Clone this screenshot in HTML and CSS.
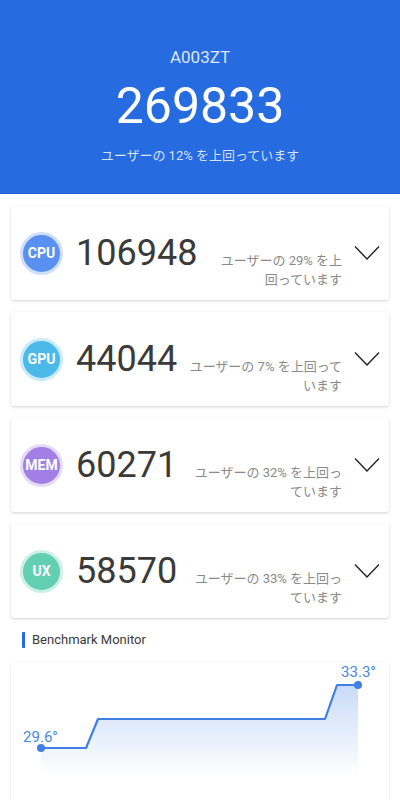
FILE: index.html
```html
<!DOCTYPE html>
<html>

<head>
  <meta charset="UTF-8">
  <title>Benchmark Result</title>
  <link rel="stylesheet" href="styles.css">
</head>

<body>
  <header class="summary">
    <div class="model">A003ZT</div>
    <div class="total">269833</div>
    <div class="rank">ユーザーの 12% を上回っています</div>
  </header>

  <main class="content">
    <div class="card">
      <div class="badge badge-cpu">CPU</div>
      <div class="score">
        <span class="number">106948</span>
        <p class="note"><span>ユーザーの 29% を上</span><span>回っています</span></p>
      </div>
      <svg class="chevron" width="26" height="16" viewBox="0 0 26 16">
        <polyline points="1,1.5 13,14 25,1.5" />
      </svg>
    </div>

    <div class="card">
      <div class="badge badge-gpu">GPU</div>
      <div class="score">
        <span class="number">44044</span>
        <p class="note"><span>ユーザーの 7% を上回って</span><span>います</span></p>
      </div>
      <svg class="chevron" width="26" height="16" viewBox="0 0 26 16">
        <polyline points="1,1.5 13,14 25,1.5" />
      </svg>
    </div>

    <div class="card">
      <div class="badge badge-mem">MEM</div>
      <div class="score">
        <span class="number">60271</span>
        <p class="note"><span>ユーザーの 32% を上回っ</span><span>ています</span></p>
      </div>
      <svg class="chevron" width="26" height="16" viewBox="0 0 26 16">
        <polyline points="1,1.5 13,14 25,1.5" />
      </svg>
    </div>

    <div class="card">
      <div class="badge badge-ux">UX</div>
      <div class="score">
        <span class="number">58570</span>
        <p class="note"><span>ユーザーの 33% を上回っ</span><span>ています</span></p>
      </div>
      <svg class="chevron" width="26" height="16" viewBox="0 0 26 16">
        <polyline points="1,1.5 13,14 25,1.5" />
      </svg>
    </div>

    <h2 class="section-title">Benchmark Monitor</h2>

    <div class="monitor">
      <svg width="378" height="150" viewBox="0 0 378 150">
        <defs>
          <linearGradient id="fade" x1="0" y1="0" x2="0" y2="1">
            <stop offset="0" stop-color="#c9dbf8" />
            <stop offset="1" stop-color="#ffffff" />
          </linearGradient>
        </defs>
        <polygon class="area" points="30,86 75,86 87,57 314,57 326,23 347,23 347,114 30,114" />
        <polyline class="line" points="30,86 75,86 87,57 314,57 326,23 347,23" />
        <circle class="dot" cx="30" cy="86" r="4" />
        <circle class="dot" cx="347" cy="23" r="4" />
        <text class="temp" x="29.5" y="80">29.6°</text>
        <text class="temp" x="347.5" y="15">33.3°</text>
      </svg>
    </div>
  </main>
</body>

</html>
```

FILE: styles.css
```css
body {
  margin: 0;
  font-family: Roboto, "Noto Sans CJK JP", sans-serif;
  background: #ffffff;
}

.summary {
  box-sizing: border-box;
  height: 194px;
  padding-top: 47px;
  text-align: center;
  color: #ffffff;
  background: #276be0;
  border-bottom: 1px solid #1d5fd2;
}

.model {
  font-size: 17px;
  line-height: 20px;
  color: rgba(255, 255, 255, 0.85);
}

.total {
  margin-top: 11px;
  font-size: 50px;
  line-height: 56px;
}

.rank {
  margin-top: 13px;
  font-size: 13px;
  line-height: 18px;
  color: rgba(255, 255, 255, 0.82);
}

.content {
  padding: 12px 11px 0;
}

.card {
  display: flex;
  align-items: center;
  height: 94px;
  margin-bottom: 12px;
  padding: 0 9px;
  box-sizing: border-box;
  border-radius: 3px;
  background: #ffffff;
  box-shadow: 0 1px 3px rgba(0, 0, 0, 0.18);
}

.badge {
  display: flex;
  align-items: center;
  justify-content: center;
  flex: none;
  width: 37px;
  height: 37px;
  border: 3px solid;
  border-radius: 50%;
  font-size: 14px;
  font-weight: 700;
  color: #ffffff;
}

.badge-cpu {
  background: #5a90f0;
  border-color: #cfdffb;
}

.badge-gpu {
  background: #4bb9ea;
  border-color: #c9ebf9;
}

.badge-mem {
  background: #a27fe6;
  border-color: #e5dbf8;
}

.badge-ux {
  background: #62cfb2;
  border-color: #cdf0e6;
}

.score {
  display: flex;
  align-items: baseline;
  flex: 1;
  align-self: flex-start;
  margin-top: 25px;
  margin-left: 13px;
}

.number {
  font-size: 36px;
  line-height: 44px;
  color: #3a3a3a;
}

.note {
  margin: 0 0 0 auto;
  font-size: 13px;
  line-height: 19px;
  text-align: right;
  color: #8a8a8a;
}

.note span {
  display: block;
  white-space: nowrap;
}

.chevron {
  flex: none;
  margin-left: 12px;
}

.chevron polyline {
  fill: none;
  stroke: #222222;
  stroke-width: 1.4;
}

.section-title {
  margin: 14px 0 14px 11px;
  padding-left: 7px;
  border-left: 3px solid #276be0;
  border-radius: 1px;
  font-size: 13px;
  font-weight: 400;
  line-height: 16px;
  color: #3a3a3a;
}

.monitor {
  height: 150px;
  border-radius: 3px;
  background: #ffffff;
  box-shadow: 0 1px 3px rgba(0, 0, 0, 0.14);
}

.monitor svg {
  display: block;
}

.area {
  fill: url(#fade);
}

.line {
  fill: none;
  stroke: #3f7fe6;
  stroke-width: 2.2;
  stroke-linejoin: round;
}

.dot {
  fill: #3f7fe6;
}

.temp {
  font-size: 15px;
  fill: #4a86e8;
  text-anchor: middle;
}
```
